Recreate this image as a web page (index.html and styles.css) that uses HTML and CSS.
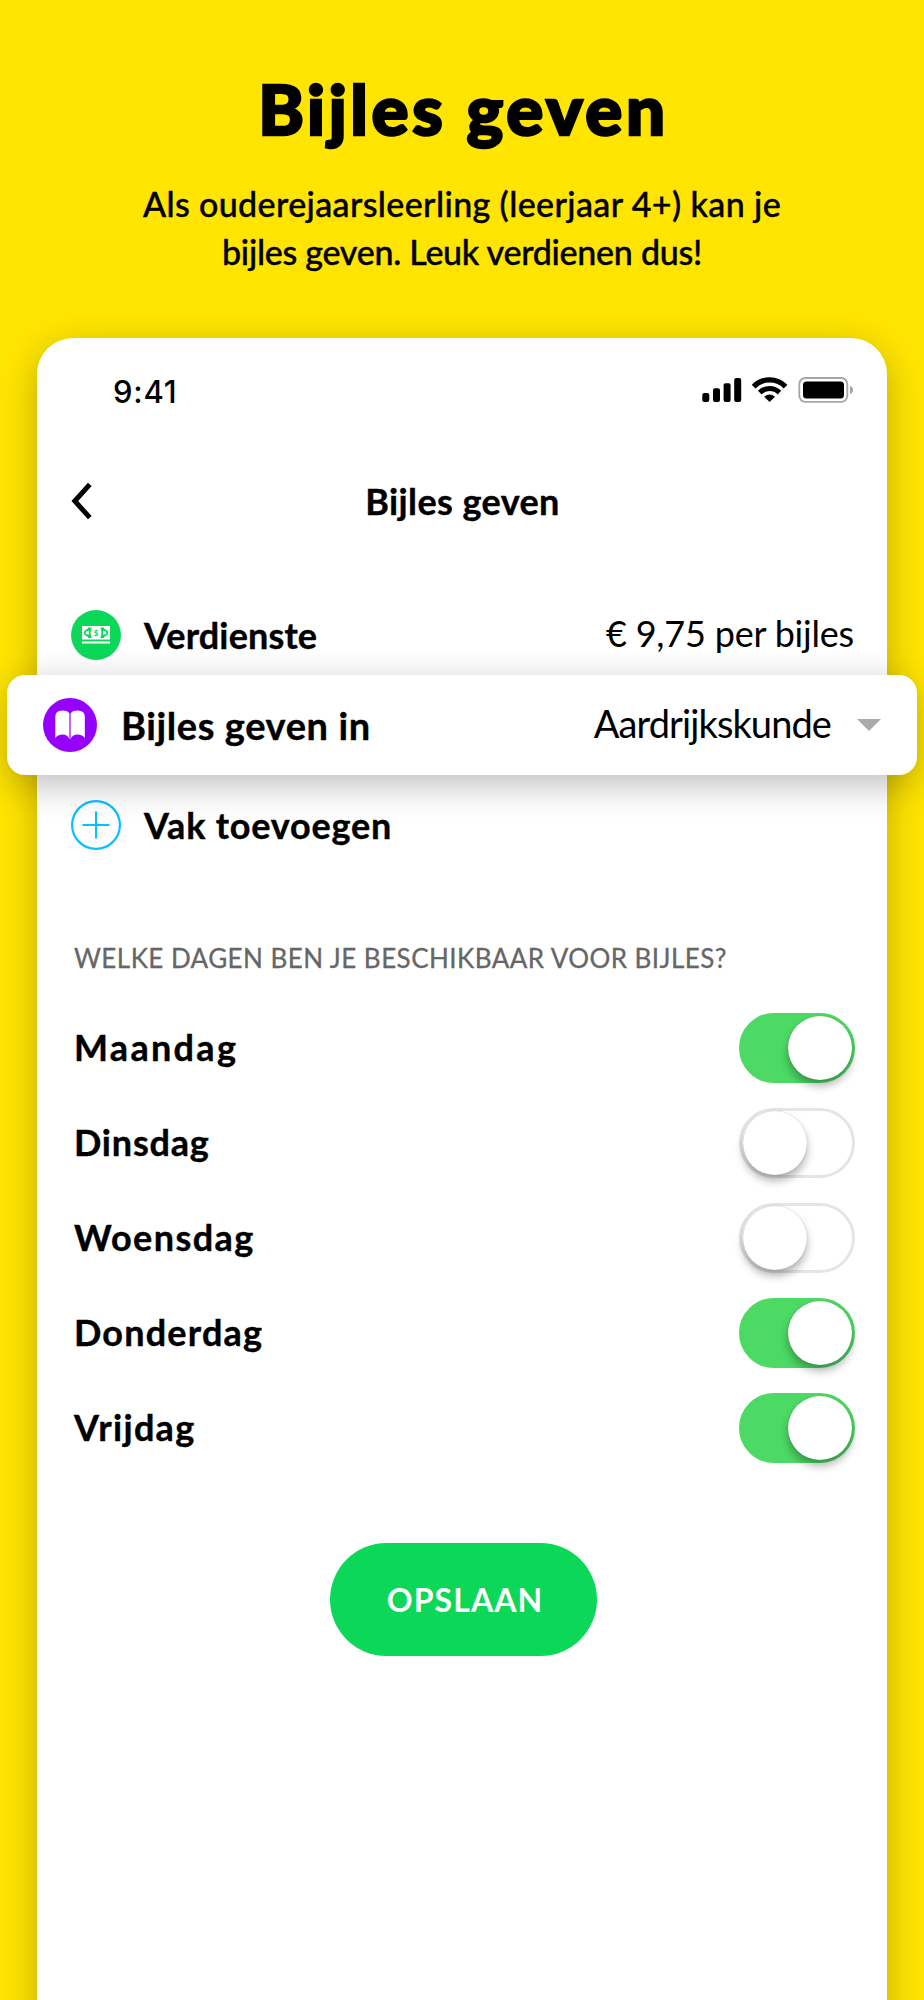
FILE: index.html
```html
<!DOCTYPE html>
<html lang="nl">
<head>
    <meta charset="utf-8">
    <meta name="viewport" content="width=device-width, initial-scale=1">
    <title>Bijles geven</title>
    <link rel="stylesheet" href="styles.css">
</head>
<body>
    <header class="hero">
        <h1>Bijles geven</h1>
        <p><span class="line1">Als ouderejaarsleerling (leerjaar 4+) kan je</span><br><span class="line2">bijles geven. Leuk verdienen dus!</span></p>
    </header>

    <main class="phone">
        <div class="status">
            <span class="time">9:41</span>
            <svg width="153" height="30" viewBox="0 0 153 30">
                <rect x="2.3" y="18" width="7" height="9" rx="2"/>
                <rect x="13" y="13.3" width="7" height="13.7" rx="2"/>
                <rect x="23.6" y="8.2" width="7" height="18.8" rx="2"/>
                <rect x="34.2" y="3" width="7" height="24" rx="2"/>
                <path d="M53.6 11.6A22.4 22.4 0 0 1 85.6 11.6M59.8 17.6A13.8 13.8 0 0 1 79.4 17.6" fill="none" stroke="#000" stroke-width="5.2"/>
                <path d="M69.6 27l-5.4-5.2q5.4-4.4 10.8 0z"/>
                <rect x="99.3" y="3" width="48" height="23.8" rx="6" fill="none" stroke="#a6a6a6" stroke-width="1.8"/>
                <rect x="103" y="6.5" width="41" height="17" rx="3.5"/>
                <path d="M150 10.8q3 1.2 3 4.2t-3 4.2z" fill="#a6a6a6"/>
            </svg>
        </div>

        <div class="nav">
            <svg class="back" width="22" height="38" viewBox="0 0 22 38">
                <path d="M18.8 2.3L3.8 19l15 16.7" fill="none" stroke="#000" stroke-width="5"/>
            </svg>
            <h2>Bijles geven</h2>
        </div>

        <div class="row earn">
            <svg width="50" height="50" viewBox="0 0 50 50">
                <circle cx="25" cy="25" r="25" fill="#0bd858"/>
                <path d="M11 16h28v13.6H11zM11 31.6h28v2H11z" fill="#fff"/>
                <path d="M20.6 17.6h-3.4q-.4 1.7-2.4 2.2-2 .8-2 3t2 3q2 .5 2.4 2.2h3.4q-2-5.2 0-10.400zM29.400 17.6h3.4q.4 1.700 2.400 2.200 2 .8 2 3t-2 3q-2 .5-2.400 2.200h-3.400q2-5.200 0-10.400z" fill="#0bd858"/>
                <path d="M17.8 20.8v4l-3-.8v-2.400zM32.200 20.800v4l3-.8v-2.400z" fill="#fff"/>
                <text x="25" y="25.7" class="dollar">$</text>
            </svg>
            <span class="label verdienste">Verdienste</span>
            <span class="value amount">€ 9,75 per bijles</span>
        </div>

        <div class="row subject">
            <svg width="54" height="54" viewBox="0 0 54 54">
                <circle cx="27" cy="27" r="27" fill="#9600ff"/>
                <path d="M26.4 41.5V15.5Q25 12.5 19.500 12.500 12.300 12.500 12.300 18.500V40.300Q14.500 36.600 19.500 36.600 25 36.600 26.400 41.500zM27.600 41.500V15.500Q29 12.500 34.500 12.500 41.800 12.500 41.800 18.500V40.300Q39.500 36.600 34.500 36.600 29 36.600 27.600 41.500z" fill="#fff"/>
            </svg>
            <span class="label geven">Bijles geven in</span>
            <span class="value vak">Aardrijkskunde</span>
            <svg class="caret" width="24" height="12" viewBox="0 0 24 12"><path d="M0 0h24L12 12z" fill="#aaa"/></svg>
        </div>

        <div class="row add">
            <svg width="50" height="50" viewBox="0 0 50 50">
                <path d="M25 11.5v27M11.5 25h27" stroke="#0abfff" stroke-width="2"/>
                <circle cx="25" cy="25" r="23.9" fill="none" stroke="#0abfff" stroke-width="2.2"/>
            </svg>
            <span class="label toevoegen">Vak toevoegen</span>
        </div>

        <h3>WELKE DAGEN BEN JE BESCHIKBAAR VOOR BIJLES?</h3>

        <div class="days">
            <div class="day"><span class="label maandag">Maandag</span><span class="switch on"><i></i></span></div>
            <div class="day"><span class="label dinsdag">Dinsdag</span><span class="switch"><i></i></span></div>
            <div class="day"><span class="label woensdag">Woensdag</span><span class="switch"><i></i></span></div>
            <div class="day"><span class="label donderdag">Donderdag</span><span class="switch on"><i></i></span></div>
            <div class="day"><span class="label vrijdag">Vrijdag</span><span class="switch on"><i></i></span></div>
        </div>

        <button class="save">OPSLAAN</button>
    </main>
</body>
</html>
```
FILE: styles.css
```css
* {
    box-sizing: border-box;
}
body {
    margin: 0;
    height: 2000px;
    overflow: hidden;
    background-color: #ffe500;
    color: #000;
    font-family: "Futura PT", Futura, Lato, sans-serif;
}
h1, h2, h3, p {
    margin: 0;
}
svg {
    display: block;
    flex: none;
}
.hero {
    height: 338px;
    padding-top: 69px;
    text-align: center;
    white-space: nowrap;
}
.hero h1 {
    padding-left: 3px;
    font-size: 69px;
    line-height: 80px;
    font-weight: 900;
    letter-spacing: 3.7px;
    -webkit-text-stroke: 2.5px #000;
}
.hero p {
    margin-top: 31px;
    font-size: 34px;
    line-height: 47.5px;
    font-weight: 500;
    -webkit-text-stroke: 0.4px #000;
}
.line1 {
    letter-spacing: 0.38px;
}
.line2 {
    letter-spacing: -0.27px;
}
.phone {
    height: 1700px;
    margin: 0 37px;
    background-color: #fff;
    border-radius: 36px 36px 0 0;
    box-shadow: 0 10px 36px rgba(0, 0, 0, 0.26);
}
.status {
    display: flex;
    align-items: center;
    justify-content: space-between;
    height: 104px;
    padding: 0 34px 0 76px;
}
.time {
    padding-top: 2px;
    font-family: Inter, sans-serif;
    font-size: 31px;
    font-weight: 500;
    letter-spacing: 0.8px;
}
.nav {
    display: grid;
    grid-template-columns: 60px 1fr 60px;
    align-items: center;
    height: 118px;
    margin-bottom: 35px;
    padding: 0 34px;
}
.nav h2 {
    padding-left: 1px;
    font-size: 36px;
    font-weight: 700;
    letter-spacing: 0.4px;
    text-align: center;
    -webkit-text-stroke: 0.4px #000;
}
.row {
    display: flex;
    align-items: center;
    height: 80px;
    padding: 0 33px 0 34px;
}
.label {
    font-size: 36px;
    font-weight: 700;
    white-space: nowrap;
    -webkit-text-stroke: 0.4px #000;
}
.row .label {
    margin-left: 23px;
}
.verdienste {
    letter-spacing: 0.15px;
}
.value {
    margin-left: auto;
    padding-bottom: 4px;
    font-size: 36px;
    white-space: nowrap;
}
.amount {
    letter-spacing: -0.2px;
}
.dollar {
    fill: #0bd858;
    font-size: 8px;
    font-weight: 700;
    text-anchor: middle;
}
.subject {
    position: relative;
    height: 100px;
    margin: 0 -30px;
    padding: 0 36px;
    border-radius: 18px;
    background-color: #fff;
    box-shadow: 0 10px 36px rgba(0, 0, 0, 0.26);
}
.subject .label, .subject .value {
    font-size: 38px;
}
.subject .label {
    margin-left: 24px;
    letter-spacing: 0.6px;
}
.subject .value {
    letter-spacing: -0.9px;
}
.caret {
    margin-left: 26px;
}
.add {
    height: 100px;
}
.toevoegen {
    letter-spacing: 0.8px;
}
.phone h3 {
    margin: 68px 37px 27px;
    font-size: 26px;
    line-height: 30px;
    font-weight: 400;
    letter-spacing: 0.45px;
    color: #666;
    white-space: nowrap;
    -webkit-text-stroke: 0.3px #666;
}
.day {
    display: flex;
    align-items: center;
    justify-content: space-between;
    height: 95px;
    padding: 0 32px 0 37px;
}
.day .label {
    padding-bottom: 1px;
}
.maandag {
    letter-spacing: 2.3px;
}
.dinsdag {
    letter-spacing: 0.8px;
}
.woensdag {
    letter-spacing: 1.4px;
}
.donderdag {
    letter-spacing: 1.2px;
}
.vrijdag {
    letter-spacing: 1.3px;
}
.switch {
    display: flex;
    align-items: center;
    width: 116px;
    height: 70px;
    padding: 0 1px;
    border: 3px solid #e5e5e5;
    border-radius: 35px;
}
.switch i {
    width: 64px;
    height: 64px;
    border-radius: 50%;
    background-color: #fff;
    box-shadow: 0 0 1px rgba(0, 0, 0, 0.3), 0 6px 8px rgba(0, 0, 0, 0.3);
}
.switch.on {
    justify-content: flex-end;
    padding: 0;
    border-color: #4cd964;
    background-color: #4cd964;
}
.save {
    display: block;
    width: 267px;
    height: 113px;
    margin: 68px 0 0 293px;
    padding: 0 0 0 3px;
    border: none;
    border-radius: 57px;
    background-color: #0bd858;
    color: #fff;
    font-family: inherit;
    font-size: 32px;
    font-weight: 700;
    letter-spacing: 1.1px;
}
```
